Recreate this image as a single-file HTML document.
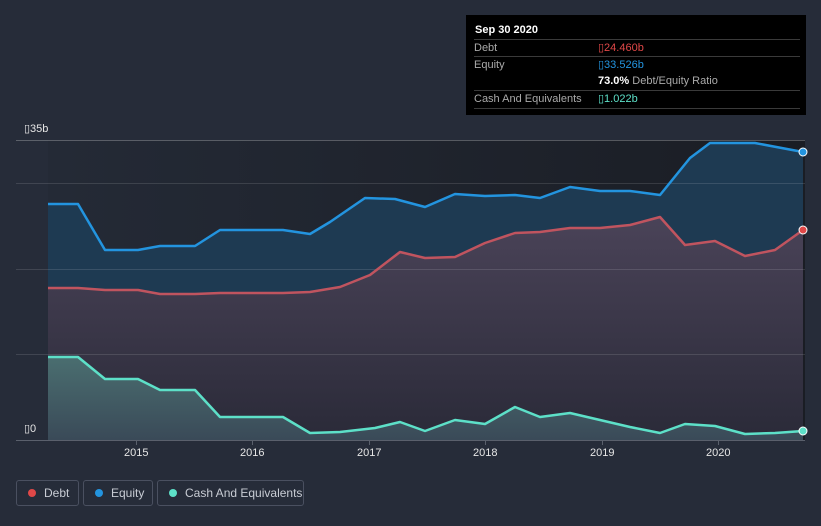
<!DOCTYPE html>
<html><head><meta charset="utf-8"><style>
body{margin:0;width:821px;height:526px;background:#262c39;font-family:"Liberation Sans",sans-serif;overflow:hidden;position:relative}
.tt{position:absolute;left:466px;top:15px;width:340px;height:100px;background:#000;color:#fff;font-size:11px}
.tt .r{position:absolute;left:8px;right:6px;border-top:1px solid #3a3a3a;height:17px;line-height:17px;color:#aaa}
.tt .v{position:absolute;left:124px;top:0}
.leg{position:absolute;top:480px;height:26px;border:1px solid #4a5060;border-radius:3px;color:#c8ccd4;font-size:12px;line-height:25px;box-sizing:border-box;padding-left:27px;white-space:nowrap}
.leg i{position:absolute;left:11px;top:8px;width:8px;height:8px;border-radius:50%}
.ax{position:absolute;color:#e6e6e6;font-size:11px}
</style></head><body>
<svg width="821" height="526" style="position:absolute;left:0;top:0">
<defs>
<linearGradient id="bg" x1="0" y1="0" x2="1" y2="0"><stop offset="0" stop-color="#242a36"/><stop offset="1" stop-color="#1a1d24"/></linearGradient>
<linearGradient id="dg" x1="0" y1="0" x2="0" y2="1"><stop offset="0" stop-color="#4a4358"/><stop offset="1" stop-color="#2a2a38"/></linearGradient>
<linearGradient id="cg" x1="0" y1="0" x2="0" y2="1"><stop offset="0" stop-color="#4a6e70"/><stop offset="1" stop-color="#3a4a58"/></linearGradient>
</defs>
<rect x="48" y="140" width="757" height="300" fill="url(#bg)"/>
<polygon fill="#1e3a52" points="48,204 78,204 105,250 138,250 160,246 195,246 220,230 283,230 310,234 330,222 365,198 395,199 425,207 455,194 485,196 515,195 540,198 570,187 600,191 630,191 660,195 690,158 710,143 755,143 803,152 803,440 48,440"/>
<polygon fill="url(#dg)" points="48,288 78,288 105,290 138,290 160,294 195,294 220,293 283,293 310,292 340,287 370,275 400,252 425,258 455,257 485,243 515,233 540,232 570,228 600,228 630,225 660,217 685,245 715,241 745,256 775,250 803,230 803,440 48,440"/>
<polygon fill="url(#cg)" points="48,357 78,357 105,379 138,379 160,390 195,390 220,417 283,417 310,433 340,432 375,428 400,422 425,431 455,420 485,424 515,407 540,417 570,413 600,420 630,427 660,433 685,424 715,426 745,434 775,433 803,431 803,440 48,440"/>
<g stroke="#ffffff" stroke-opacity="0.12" stroke-width="1">
<line x1="16" y1="140.5" x2="805" y2="140.5" stroke-opacity="0.25"/><line x1="16" y1="183.5" x2="805" y2="183.5"/><line x1="16" y1="269.5" x2="805" y2="269.5"/><line x1="16" y1="354.5" x2="805" y2="354.5"/>
</g>
<line x1="16" y1="440.5" x2="805" y2="440.5" stroke="#5a606c"/>
<g stroke="#5a606c"><line x1="136.5" y1="440" x2="136.5" y2="445"/><line x1="252.5" y1="440" x2="252.5" y2="445"/><line x1="369.5" y1="440" x2="369.5" y2="445"/><line x1="485.5" y1="440" x2="485.5" y2="445"/><line x1="602.5" y1="440" x2="602.5" y2="445"/><line x1="718.5" y1="440" x2="718.5" y2="445"/></g>
<g fill="none" stroke-width="2.5" stroke-linejoin="round">
<polyline stroke="#2394df" points="48,204 78,204 105,250 138,250 160,246 195,246 220,230 283,230 310,234 330,222 365,198 395,199 425,207 455,194 485,196 515,195 540,198 570,187 600,191 630,191 660,195 690,158 710,143 755,143 803,152"/>
<polyline stroke="#c0545f" points="48,288 78,288 105,290 138,290 160,294 195,294 220,293 283,293 310,292 340,287 370,275 400,252 425,258 455,257 485,243 515,233 540,232 570,228 600,228 630,225 660,217 685,245 715,241 745,256 775,250 803,230"/>
<polyline stroke="#5de0c8" points="48,357 78,357 105,379 138,379 160,390 195,390 220,417 283,417 310,433 340,432 375,428 400,422 425,431 455,420 485,424 515,407 540,417 570,413 600,420 630,427 660,433 685,424 715,426 745,434 775,433 803,431"/>
</g>
<circle cx="803" cy="152" r="4" fill="#2394df" stroke="#fff" stroke-width="1"/>
<circle cx="803" cy="230" r="4" fill="#e04848" stroke="#fff" stroke-width="1"/>
<circle cx="803" cy="431" r="4" fill="#5de0c8" stroke="#fff" stroke-width="1"/>
</svg>
<div class="ax" style="left:24px;top:122px">▯35b</div>
<div class="ax" style="left:24px;top:422px">▯0</div>
<div class="ax" style="left:124px;top:447px">2015</div>
<div class="ax" style="left:240px;top:447px">2016</div>
<div class="ax" style="left:357px;top:447px">2017</div>
<div class="ax" style="left:473px;top:447px">2018</div>
<div class="ax" style="left:590px;top:447px">2019</div>
<div class="ax" style="left:706px;top:447px">2020</div>
<div class="tt">
<div style="position:absolute;left:9px;top:9px;font-weight:bold">Sep 30 2020</div>
<div class="r" style="top:24px">Debt<span class="v" style="color:#e04848">▯24.460b</span></div>
<div class="r" style="top:41px">Equity<span class="v" style="color:#2394df">▯33.526b</span></div>
<div class="r" style="top:58px;border-top:none"><span class="v" style="color:#aaa"><b style="color:#fff">73.0%</b> Debt/Equity Ratio</span></div>
<div class="r" style="top:75px;border-bottom:1px solid #3a3a3a">Cash And Equivalents<span class="v" style="color:#5de0c8">▯1.022b</span></div>
</div>
<div class="leg" style="left:16px;width:63px"><i style="background:#e04848"></i>Debt</div>
<div class="leg" style="left:83px;width:70px"><i style="background:#2394df"></i>Equity</div>
<div class="leg" style="left:157px;width:147px"><i style="background:#5de0c8"></i>Cash And Equivalents</div>
</body></html>
